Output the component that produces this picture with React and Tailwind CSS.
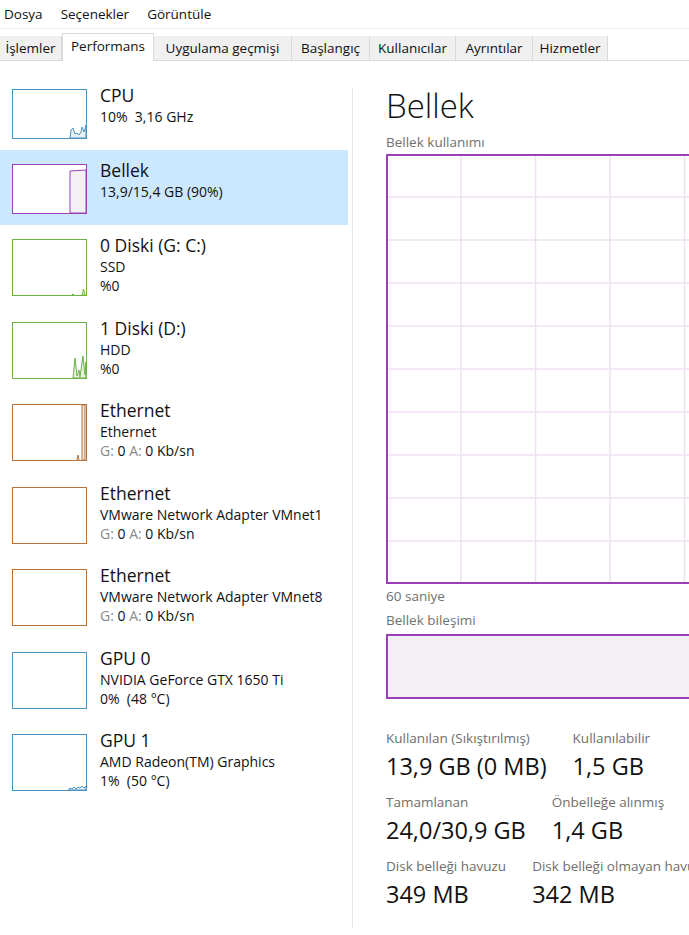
import React from 'react';

const font = "font-['Open_Sans',sans-serif]";

const tabs = [
  { t: 'İşlemler', w: 'w-[62px]' },
  { t: 'Performans', w: 'w-[92px]', sel: true },
  { t: 'Uygulama geçmişi', w: 'w-[138px]' },
  { t: 'Başlangıç', w: 'w-[78px]' },
  { t: 'Kullanıcılar', w: 'w-[86px]' },
  { t: 'Ayrıntılar', w: 'w-[77px]' },
  { t: 'Hizmetler', w: 'w-[75px]' },
];

// small sparkline drawings for each thumbnail
const Spark = ({ kind, color, h }) => {
  if (kind === 'cpu') {
    return (
      <path
        d={`M58 ${h} L59 ${h - 8} L61 ${h - 10} L63 ${h - 4} L65 ${h - 5} L67 ${h - 3} L69 ${h - 6} L70 ${h - 11} L72 ${h - 6} L73 ${h - 9} L74 ${h - 13} L74 ${h} Z`}
        fill="#e6f0f7"
        stroke={color}
        strokeWidth="1"
      />
    );
  }
  if (kind === 'mem') {
    return <path d={`M58 ${h} L58 7 L74 6 L74 ${h} Z`} fill="#f4f1f5" stroke={color} strokeWidth="1" />;
  }
  if (kind === 'disk0') {
    return (
      <g stroke={color} strokeWidth="1" fill="#e6f2dd">
        <path d={`M60 ${h} L61 ${h - 1} L62 ${h}`} />
        <path d={`M70 ${h} L71.5 ${h - 6} L73 ${h} Z`} />
      </g>
    );
  }
  if (kind === 'disk1') {
    return (
      <path
        d={`M61 ${h} L63 ${h - 20} L65 ${h - 2} L67 ${h - 8} L68 ${h - 1} L71 ${h - 22} L73 ${h - 3} L74 ${h - 16} L74 ${h} Z`}
        fill="#e6f2dd"
        stroke={color}
        strokeWidth="1"
      />
    );
  }
  if (kind === 'eth0') {
    return (
      <g stroke={color} strokeWidth="1" fill="#f3e8de">
        <path d={`M70 ${h} L70 1 L73 1 L73 ${h} Z`} />
        <path d={`M65 ${h} L66 ${h - 5} L67 ${h}`} fill="none" />
      </g>
    );
  }
  if (kind === 'gpu1') {
    return (
      <path
        d={`M56 ${h} L58 ${h - 2} L60 ${h - 1} L62 ${h - 3} L64 ${h - 1} L66 ${h - 3} L68 ${h - 2} L70 ${h - 4} L72 ${h - 2} L74 ${h - 4} L74 ${h} Z`}
        fill="#e6f0f7"
        stroke={color}
        strokeWidth="1"
      />
    );
  }
  return null;
};

const Thumb = ({ color, kind, tall }) => {
  const h = tall ? 57 : 50;
  return (
    <svg width="75" height={h} className="shrink-0 block">
      <rect x="0.5" y="0.5" width="74" height={h - 1} fill="white" stroke={color} strokeWidth="1" />
      <Spark kind={kind} color={color} h={h - 1} />
    </svg>
  );
};

const Net = () => (
  <>
    <span className="text-[#8a8a8a]">G:</span> 0 <span className="text-[#8a8a8a]">A:</span> 0 Kb/sn
  </>
);

const items = [
  { title: 'CPU', lines: ['10%  3,16 GHz'], color: '#4c93c2', kind: 'cpu' },
  { title: 'Bellek', lines: ['13,9/15,4 GB (90%)'], color: '#9a3fb8', kind: 'mem', active: true },
  { title: '0 Diski (G: C:)', lines: ['SSD', '%0'], color: '#6bb246', kind: 'disk0' },
  { title: '1 Diski (D:)', lines: ['HDD', '%0'], color: '#6bb246', kind: 'disk1' },
  { title: 'Ethernet', lines: ['Ethernet', <Net key="n" />], color: '#b8733a', kind: 'eth0' },
  { title: 'Ethernet', lines: ['VMware Network Adapter VMnet1', <Net key="n" />], color: '#b8733a', kind: 'eth' },
  { title: 'Ethernet', lines: ['VMware Network Adapter VMnet8', <Net key="n" />], color: '#b8733a', kind: 'eth' },
  { title: 'GPU 0', lines: ['NVIDIA GeForce GTX 1650 Ti', '0%  (48 °C)'], color: '#4c93c2', kind: 'gpu' },
  { title: 'GPU 1', lines: ['AMD Radeon(TM) Graphics', '1%  (50 °C)'], color: '#4c93c2', kind: 'gpu1' },
];

const SideItem = ({ item }) => {
  const tall = item.lines.length > 1;
  return (
    <div
      className={`flex items-start gap-[13px] pl-[12px] pt-[14px] ${tall ? 'h-[82.5px]' : 'h-[75px]'} ${item.active ? 'bg-[#cce8ff]' : ''}`}
    >
      <Thumb color={item.color} kind={item.kind} tall={tall} />
      <div className="-mt-[5px] text-[#111]">
        <div className="text-[17.5px] leading-[23px]">{item.title}</div>
        {item.lines.map((l, i) => (
          <div key={i} className="text-[14px] leading-[19px] whitespace-pre">{l}</div>
        ))}
      </div>
    </div>
  );
};

const Stat = ({ label, value }) => (
  <div className="flex flex-col">
    <div className="text-[13.5px] leading-[17px] text-[#6e6e6e] whitespace-nowrap">{label}</div>
    <div className="text-[23.5px] leading-[32px] text-[#111] whitespace-nowrap mt-[3px]">{value}</div>
  </div>
);

const UsageChart = () => {
  const w = 420;
  const h = 430;
  const vs = [];
  for (let x = 75; x < w; x += 74.5) vs.push(x);
  const hs = [];
  for (let y = 43; y < h; y += 43) hs.push(y);
  return (
    <svg width={w} height={h} className="block">
      {vs.map((x) => (
        <line key={x} x1={x} y1="0" x2={x} y2={h} stroke="#eee2f1" strokeWidth="1.5" />
      ))}
      {hs.map((y) => (
        <line key={y} x1="0" y1={y} x2={w} y2={y} stroke="#eee2f1" strokeWidth="1.5" />
      ))}
      <rect x="1" y="1" width={w} height={h - 2} fill="none" stroke="#9a3fb8" strokeWidth="2" />
    </svg>
  );
};

export default function App() {
  return (
    <div className={`w-[689px] h-[935px] overflow-hidden bg-white ${font}`}>
      <div className="h-[29px] flex items-center gap-[18px] pl-[4px] text-[13.5px] text-[#111] border-b border-[#f0f0f0]">
        <span>Dosya</span>
        <span>Seçenekler</span>
        <span>Görüntüle</span>
      </div>
      <div className="h-[32px] flex items-end border-b border-[#d9d9d9] pt-[4px]">
        {tabs.map(({ t, w, sel }) => (
          <div
            key={t}
            className={`${w} text-[13.5px] text-[#111] flex items-center justify-center border-r border-[#d9d9d9] ${
              sel ? 'bg-white h-[28px] -mb-px border-l border-t pb-[2px]' : 'bg-[#f0f0f0] h-[24px]'
            }`}
          >
            {t}
          </div>
        ))}
      </div>
      <div className="flex">
        <div className="w-[348px] shrink-0 pt-[14px]">
          {items.map((it, i) => (
            <SideItem key={i} item={it} />
          ))}
        </div>
        <div className="w-px bg-[#e6e6e6] mt-[27px] h-[840px] ml-[4px] shrink-0" />
        <div className="pl-[33px] pt-[25px] flex-1 min-w-0">
          <div className="text-[33px] leading-[40px] text-[#111] font-light">Bellek</div>
          <div className="text-[13.5px] leading-[16px] text-[#707070] mt-[8px] mb-[4px]">Bellek kullanımı</div>
          <UsageChart />
          <div className="text-[13.5px] leading-[16px] text-[#707070] mt-[4px]">60 saniye</div>
          <div className="text-[13.5px] leading-[16px] text-[#707070] mt-[8px]">Bellek bileşimi</div>
          <div className="w-[420px] h-[65px] bg-[#f3f0f5] border-2 border-[#9a3fb8] mt-[6px]" />
          <div className="mt-[31px] flex flex-col gap-[12px]">
            <div className="flex gap-[26px]">
              <Stat label="Kullanılan (Sıkıştırılmış)" value="13,9 GB (0 MB)" />
              <Stat label="Kullanılabilir" value="1,5 GB" />
            </div>
            <div className="flex gap-[26px]">
              <Stat label="Tamamlanan" value="24,0/30,9 GB" />
              <Stat label="Önbelleğe alınmış" value="1,4 GB" />
            </div>
            <div className="flex gap-[26px]">
              <Stat label="Disk belleği havuzu" value="349 MB" />
              <Stat label="Disk belleği olmayan havuz" value="342 MB" />
            </div>
          </div>
        </div>
      </div>
    </div>
  );
}
